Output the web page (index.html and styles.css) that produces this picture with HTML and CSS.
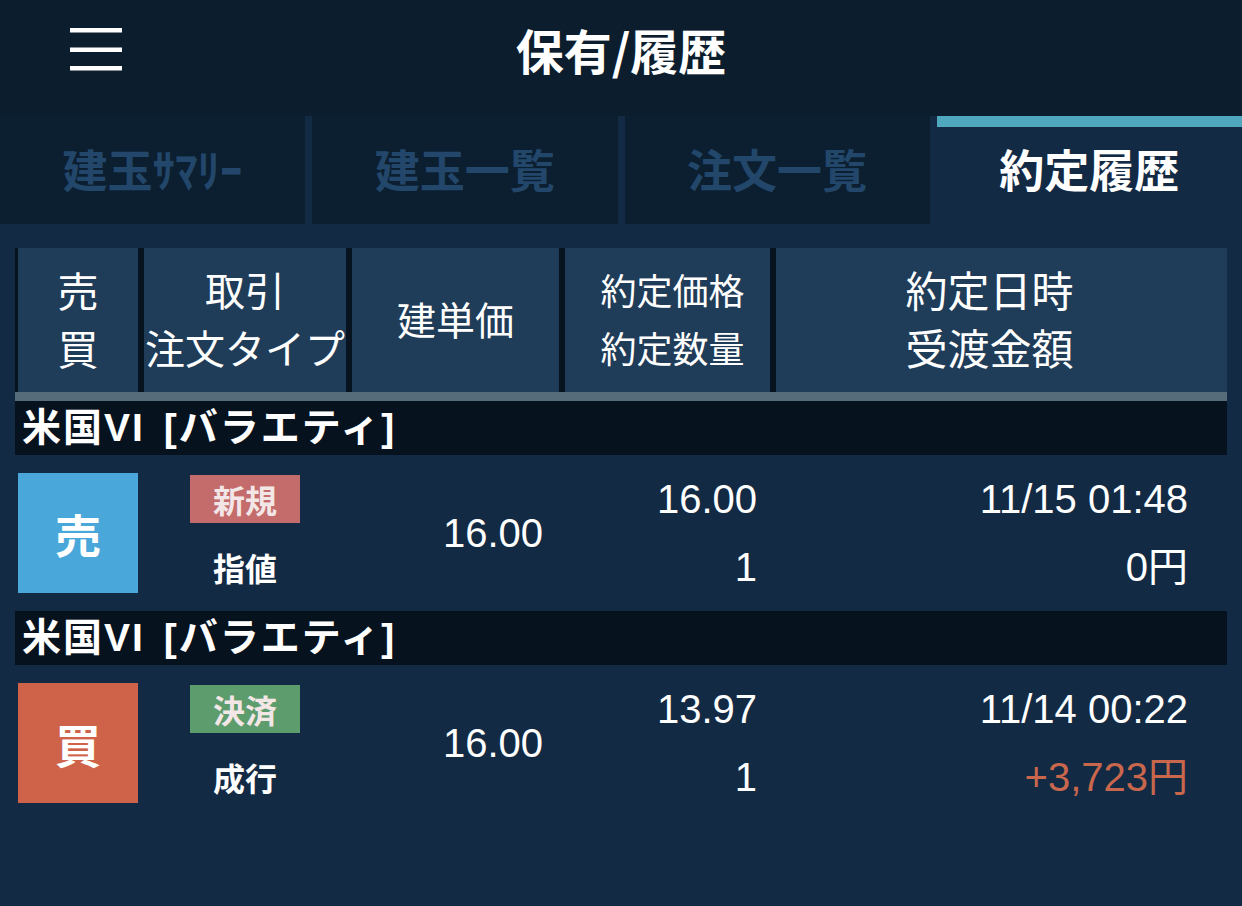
FILE: index.html
```html
<!DOCTYPE html>
<html lang="ja">
<head>
    <meta charset="UTF-8">
    <meta name="viewport" content="width=device-width, initial-scale=1.0">
    <title>保有/履歴</title>
    <link rel="stylesheet" href="styles.css">
</head>
<body>
    <div class="topbar">
        <svg class="menu" width="52" height="44" viewBox="0 0 52 44">
            <rect x="0" y="0" width="52" height="4.5" fill="#fff"/>
            <rect x="0" y="19.5" width="52" height="4.5" fill="#fff"/>
            <rect x="0" y="38" width="52" height="4.5" fill="#fff"/>
        </svg>
        <div class="title">保有/履歴</div>
    </div>

    <div class="tabs">
        <div class="tab">建玉ｻﾏﾘｰ</div>
        <div class="tab">建玉一覧</div>
        <div class="tab">注文一覧</div>
        <div class="tab active">約定履歴</div>
    </div>

    <div class="list">
        <div class="head">
            <div class="hcell side-h">売<br>買</div>
            <div class="hcell kind-h">取引<br>注文タイプ</div>
            <div class="hcell basis-h">建単価</div>
            <div class="hcell exec-h">約定価格<br>約定数量</div>
            <div class="hcell date-h">約定日時<br>受渡金額</div>
        </div>

        <div class="group">米国VI [バラエティ]</div>
        <div class="row">
            <div class="side sell">売</div>
            <div class="kind">
                <div class="line"><span class="badge new">新規</span></div>
                <div class="line">指値</div>
            </div>
            <div class="num basis">16.00</div>
            <div class="num pair">
                <div class="line">16.00</div>
                <div class="line">1</div>
            </div>
            <div class="num pair last">
                <div class="line">11/15 01:48</div>
                <div class="line">0円</div>
            </div>
        </div>

        <div class="group">米国VI [バラエティ]</div>
        <div class="row">
            <div class="side buy">買</div>
            <div class="kind">
                <div class="line"><span class="badge settle">決済</span></div>
                <div class="line">成行</div>
            </div>
            <div class="num basis">16.00</div>
            <div class="num pair">
                <div class="line">13.97</div>
                <div class="line">1</div>
            </div>
            <div class="num pair last">
                <div class="line">11/14 00:22</div>
                <div class="line profit">+3,723円</div>
            </div>
        </div>
    </div>
</body>
</html>
```

FILE: styles.css
```css
body {
    margin: 0;
    height: 906px;
    background-color: #132a44;
    color: #fff;
    font-family: "Noto Sans CJK JP", "Liberation Sans", sans-serif;
}
.topbar {
    position: relative;
    height: 116px;
    background-color: #0c1e2e;
    display: flex;
    justify-content: center;
}
.menu {
    position: absolute;
    left: 70px;
    top: 28px;
}
.title {
    font-size: 48px;
    font-weight: bold;
    line-height: 98px;
}
.tabs {
    display: grid;
    grid-template-columns: repeat(4, 1fr);
    gap: 7px;
    height: 108px;
}
.tab {
    background-color: #0c1f30;
    color: #22476b;
    font-size: 45px;
    font-weight: bold;
    line-height: 106px;
    text-align: center;
}
.tab.active {
    background-color: #132a44;
    color: #fff;
    box-shadow: inset 0 11px 0 #4fa8bd;
}
.list {
    padding: 24px 15px 0;
}
.head,
.row {
    display: grid;
    grid-template-columns: 120px 202px 207px 205px 1fr;
    column-gap: 6px;
    padding-left: 3px;
}
.head {
    background-color: #07131f;
    border-bottom: 9px solid #576c7b;
}
.hcell {
    height: 144px;
    padding-bottom: 4px;
    box-sizing: border-box;
    background-color: #1f3c58;
    display: flex;
    align-items: center;
    justify-content: center;
    text-align: center;
    font-size: 37px;
    line-height: 58px;
}
.side-h {
    font-size: 41px;
}
.kind-h {
    font-size: 40px;
}
.basis-h {
    font-size: 39px;
}
.exec-h {
    font-size: 36px;
    padding-left: 10px;
}
.date-h {
    font-size: 42px;
    padding-right: 24px;
}
.group {
    height: 54px;
    line-height: 54px;
    padding-left: 7px;
    background-color: #06121e;
    font-family: "Liberation Sans", "Noto Sans CJK JP", sans-serif;
    font-size: 39px;
    font-weight: bold;
    letter-spacing: 2px;
    word-spacing: 6px;
}
.row {
    height: 156px;
    align-items: center;
}
.side {
    width: 120px;
    height: 120px;
    line-height: 120px;
    text-align: center;
    font-size: 46px;
    font-weight: bold;
}
.sell {
    background-color: #4aa7da;
}
.buy {
    background-color: #cf6349;
}
.kind {
    text-align: center;
    font-size: 32px;
    font-weight: bold;
}
.line {
    height: 68px;
    line-height: 68px;
}
.kind .line {
    display: flex;
    align-items: center;
    justify-content: center;
}
.badge {
    width: 110px;
    height: 48px;
    line-height: 48px;
    color: #f3e6e6;
}
.new {
    background-color: #c36c6b;
}
.settle {
    background-color: #5d9c6c;
}
.num {
    font-family: "Liberation Sans", "Noto Sans CJK JP", sans-serif;
    font-size: 40px;
    text-align: right;
}
.basis {
    padding-right: 16px;
}
.pair {
    padding-right: 13px;
}
.pair.last {
    padding-right: 39px;
}
.profit {
    color: #c9674d;
}
```
